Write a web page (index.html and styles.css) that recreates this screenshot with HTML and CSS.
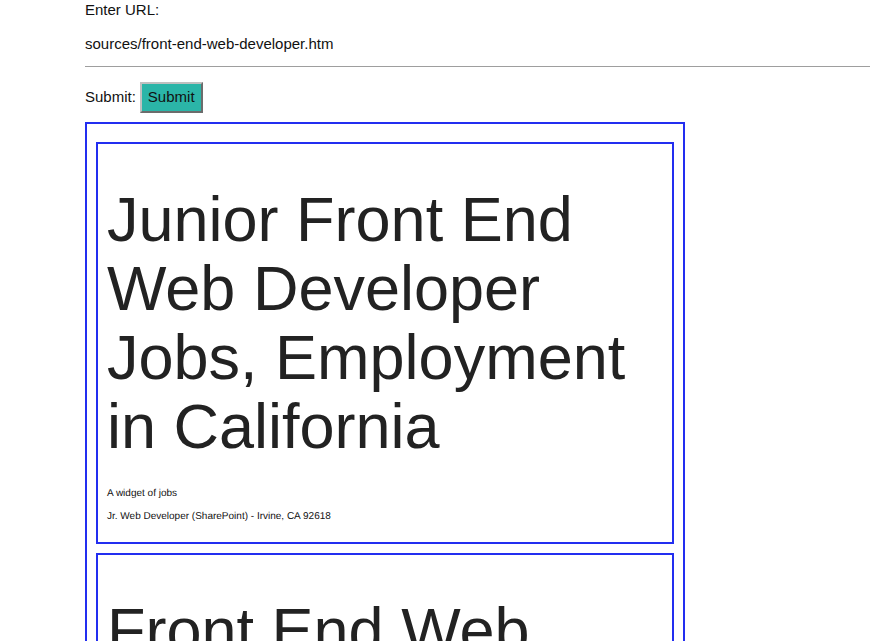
FILE: index.html
```html
<!DOCTYPE html>
<html lang="en">
<head>
<meta charset="utf-8">
<title>Job feed reader</title>
<link rel="stylesheet" href="styles.css">
</head>
<body>
<form class="feed-form">
<label class="url-label" for="url">Enter URL:</label>
<input class="url-input" id="url" type="text" value="sources/front-end-web-developer.htm">
<div class="submit-row"><label for="submit">Submit:</label><button class="submit" id="submit" type="button">Submit</button></div>
</form>
<main class="feed">
<article class="item">
<h1>Junior Front End Web Developer Jobs, Employment in California</h1>
<p>A widget of jobs</p>
<p>Jr. Web Developer (SharePoint) - Irvine, CA 92618</p>
</article>
<article class="item">
<h1>Front End Web</h1>
</article>
</main>
</body>
</html>
```
FILE: styles.css
```css
* {
  box-sizing: border-box;
}

body {
  margin: 0 0 0 85px;
  height: 100vh;
  overflow: hidden;
  background: #fff;
  color: #222;
  font-family: "Liberation Sans", Arial, sans-serif;
  font-size: 15px;
  line-height: 20px;
}

.feed-form {
  color: #111;
}

.url-label {
  display: block;
}

.url-input {
  display: block;
  width: 100%;
  height: 47px;
  padding: 0;
  border: 0;
  border-bottom: 1px solid #9e9e9e;
  border-radius: 0;
  background: transparent;
  color: inherit;
  font: inherit;
  outline: 0;
}

.submit-row {
  display: flex;
  align-items: baseline;
  gap: 4px;
  margin-top: 15px;
}

.submit {
  padding: 3px 6px 4px;
  border: 2px solid;
  border-color: #c0c0c0 #6c6c6c #6c6c6c #c0c0c0;
  border-radius: 0;
  background: #2bb5a8;
  color: inherit;
  font: inherit;
}

.feed {
  max-width: 600px;
  margin-top: 9px;
  padding: 18px 9px 9px;
  border: 2px solid #232ef0;
}

.item {
  margin-bottom: 9px;
  padding: 9px 9px 10px;
  border: 2px solid #232ef0;
  font-size: 10px;
  line-height: 15px;
}

.item h1 {
  margin: 32px 0 25px;
  font-size: 63px;
  font-weight: 400;
  line-height: 69px;
}

.item p {
  margin: 0 0 8px;
  color: #111;
  text-rendering: geometricPrecision;
}
```
